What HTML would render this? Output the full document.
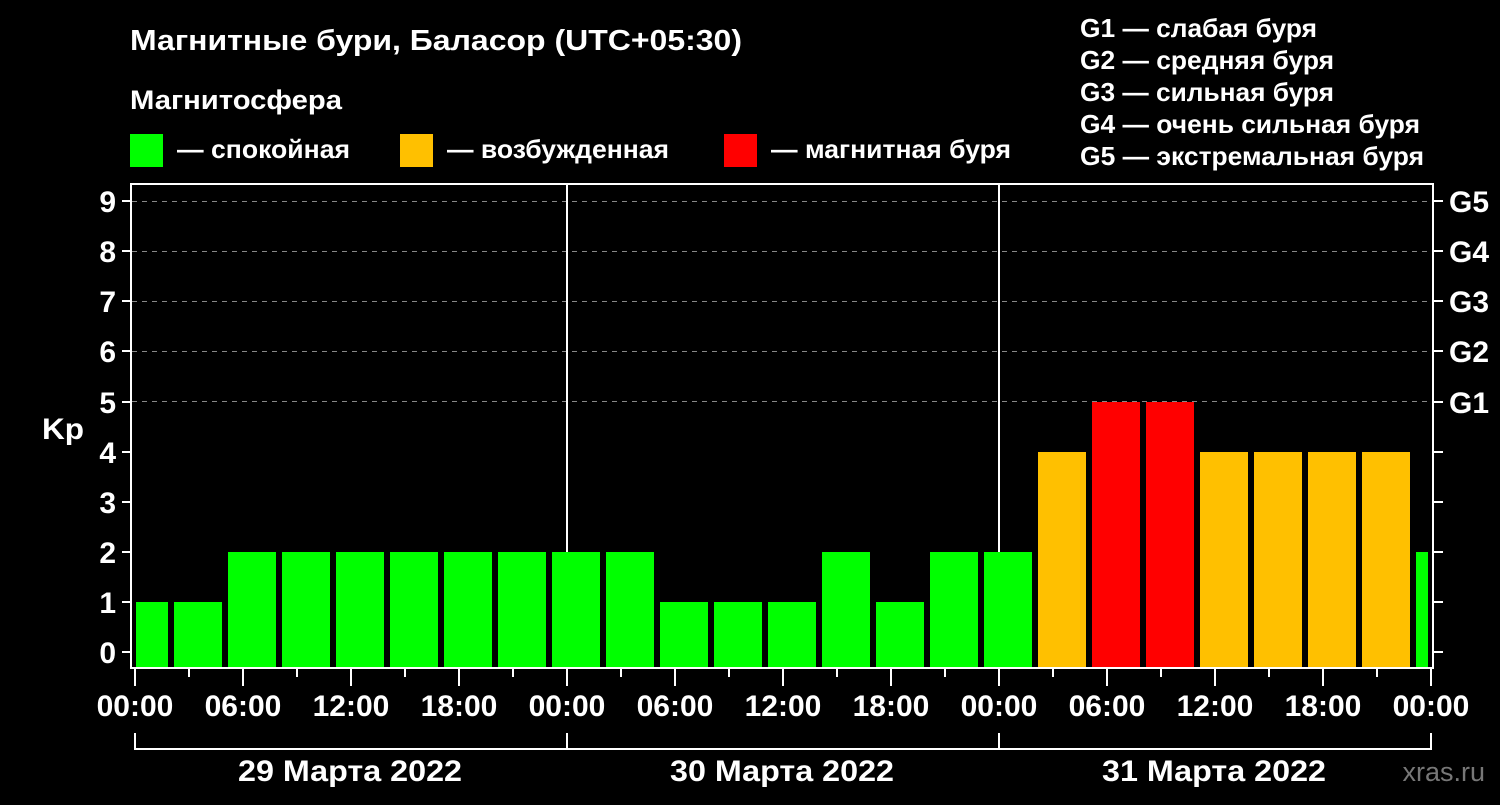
<!DOCTYPE html>
<html><head><meta charset="utf-8"><style>
body{margin:0;background:#000;width:1500px;height:800px;overflow:hidden}
svg text{font-family:"Liberation Sans",sans-serif;font-weight:bold;fill:#fff}
</style></head><body>
<svg width="1500" height="800" xmlns="http://www.w3.org/2000/svg">
<text x="130" y="50" font-size="29" textLength="612" lengthAdjust="spacingAndGlyphs">Магнитные бури, Баласор (UTC+05:30)</text>
<text x="130" y="109" font-size="27" textLength="212" lengthAdjust="spacingAndGlyphs">Магнитосфера</text>
<rect x="130" y="134" width="33" height="33" fill="#00ff00"/>
<text x="177" y="158" font-size="26" textLength="173" lengthAdjust="spacingAndGlyphs">— спокойная</text>
<rect x="400" y="134" width="33" height="33" fill="#ffc000"/>
<text x="447" y="158" font-size="26" textLength="222" lengthAdjust="spacingAndGlyphs">— возбужденная</text>
<rect x="724" y="134" width="33" height="33" fill="#ff0000"/>
<text x="771" y="158" font-size="26" textLength="240" lengthAdjust="spacingAndGlyphs">— магнитная буря</text>
<g font-size="26">
<text x="1080" y="37" textLength="237" lengthAdjust="spacingAndGlyphs">G1 — слабая буря</text>
<text x="1080" y="69" textLength="254" lengthAdjust="spacingAndGlyphs">G2 — средняя буря</text>
<text x="1080" y="101" textLength="254" lengthAdjust="spacingAndGlyphs">G3 — сильная буря</text>
<text x="1080" y="133" textLength="340" lengthAdjust="spacingAndGlyphs">G4 — очень сильная буря</text>
<text x="1080" y="165" textLength="344" lengthAdjust="spacingAndGlyphs">G5 — экстремальная буря</text>
</g>
<g stroke="#888" stroke-dasharray="5,5" stroke-width="1">
<line x1="132" y1="201.5" x2="1433" y2="201.5"/><line x1="132" y1="251.5" x2="1433" y2="251.5"/>
<line x1="132" y1="301.5" x2="1433" y2="301.5"/><line x1="132" y1="351.5" x2="1433" y2="351.5"/>
<line x1="132" y1="401.5" x2="1433" y2="401.5"/>
</g>
<g stroke="#fff" stroke-width="2">
<line x1="567" y1="184" x2="567" y2="668"/><line x1="999" y1="184" x2="999" y2="668"/>
</g>
<g>
<rect x="136" y="602" width="32" height="66" fill="#00ff00"/>
<rect x="174" y="602" width="48" height="66" fill="#00ff00"/>
<rect x="228" y="552" width="48" height="116" fill="#00ff00"/>
<rect x="282" y="552" width="48" height="116" fill="#00ff00"/>
<rect x="336" y="552" width="48" height="116" fill="#00ff00"/>
<rect x="390" y="552" width="48" height="116" fill="#00ff00"/>
<rect x="444" y="552" width="48" height="116" fill="#00ff00"/>
<rect x="498" y="552" width="48" height="116" fill="#00ff00"/>
<rect x="552" y="552" width="48" height="116" fill="#00ff00"/>
<rect x="606" y="552" width="48" height="116" fill="#00ff00"/>
<rect x="660" y="602" width="48" height="66" fill="#00ff00"/>
<rect x="714" y="602" width="48" height="66" fill="#00ff00"/>
<rect x="768" y="602" width="48" height="66" fill="#00ff00"/>
<rect x="822" y="552" width="48" height="116" fill="#00ff00"/>
<rect x="876" y="602" width="48" height="66" fill="#00ff00"/>
<rect x="930" y="552" width="48" height="116" fill="#00ff00"/>
<rect x="984" y="552" width="48" height="116" fill="#00ff00"/>
<rect x="1038" y="452" width="48" height="216" fill="#ffc000"/>
<rect x="1092" y="402" width="48" height="266" fill="#ff0000"/>
<rect x="1146" y="402" width="48" height="266" fill="#ff0000"/>
<rect x="1200" y="452" width="48" height="216" fill="#ffc000"/>
<rect x="1254" y="452" width="48" height="216" fill="#ffc000"/>
<rect x="1308" y="452" width="48" height="216" fill="#ffc000"/>
<rect x="1362" y="452" width="48" height="216" fill="#ffc000"/>
<rect x="1416" y="552" width="12" height="116" fill="#00ff00"/>
</g>
<g stroke="#fff" stroke-width="2" fill="none">
<path d="M131 668 V184 H1433 V668 Z"/>
<line x1="567" y1="184" x2="567" y2="552"/><line x1="999" y1="184" x2="999" y2="552"/>
<path d="M135 733 V749 H1431 V733 M567 733 V749 M999 733 V749"/>
<path d="M122 652H131M122 602H131M122 552H131M122 502H131M122 452H131M122 402H131M122 351H131M122 301H131M122 251H131M122 201H131"/>
<path d="M1433 652H1443M1433 602H1443M1433 552H1443M1433 502H1443M1433 452H1443M1433 402H1443M1433 351H1443M1433 301H1443M1433 251H1443M1433 201H1443"/>
<path d="M135 668V686M243 668V686M351 668V686M459 668V686M567 668V686M675 668V686M783 668V686M891 668V686M999 668V686M1107 668V686M1215 668V686M1323 668V686M1431 668V686"/>
<path d="M189 668V677M297 668V677M405 668V677M513 668V677M621 668V677M729 668V677M837 668V677M945 668V677M1053 668V677M1161 668V677M1269 668V677M1377 668V677"/>
</g>
<g font-size="30" text-anchor="end">
<text x="116" y="663">0</text><text x="116" y="613">1</text><text x="116" y="563">2</text><text x="116" y="513">3</text><text x="116" y="463">4</text><text x="116" y="413">5</text><text x="116" y="362">6</text><text x="116" y="312">7</text><text x="116" y="262">8</text><text x="116" y="212">9</text>
</g>
<g font-size="30">
<text x="1449" y="413">G1</text><text x="1449" y="362">G2</text><text x="1449" y="312">G3</text><text x="1449" y="262">G4</text><text x="1449" y="212">G5</text>
</g>
<g font-size="30" text-anchor="middle">
<text x="135" y="716">00:00</text><text x="243" y="716">06:00</text><text x="351" y="716">12:00</text><text x="459" y="716">18:00</text>
<text x="567" y="716">00:00</text><text x="675" y="716">06:00</text><text x="783" y="716">12:00</text><text x="891" y="716">18:00</text>
<text x="999" y="716">00:00</text><text x="1107" y="716">06:00</text><text x="1215" y="716">12:00</text><text x="1323" y="716">18:00</text>
<text x="1431" y="716">00:00</text>
</g>
<text x="42" y="439" font-size="30" textLength="42" lengthAdjust="spacingAndGlyphs">Kp</text>
<g font-size="30" text-anchor="middle">
<text x="350" y="781" textLength="224" lengthAdjust="spacingAndGlyphs">29 Марта 2022</text>
<text x="782" y="781" textLength="224" lengthAdjust="spacingAndGlyphs">30 Марта 2022</text>
<text x="1214" y="781" textLength="224" lengthAdjust="spacingAndGlyphs">31 Марта 2022</text>
</g>
<text x="1485" y="781" font-size="27" text-anchor="end" style="fill:#777;font-weight:normal">xras.ru</text>
</svg>
</body></html>
